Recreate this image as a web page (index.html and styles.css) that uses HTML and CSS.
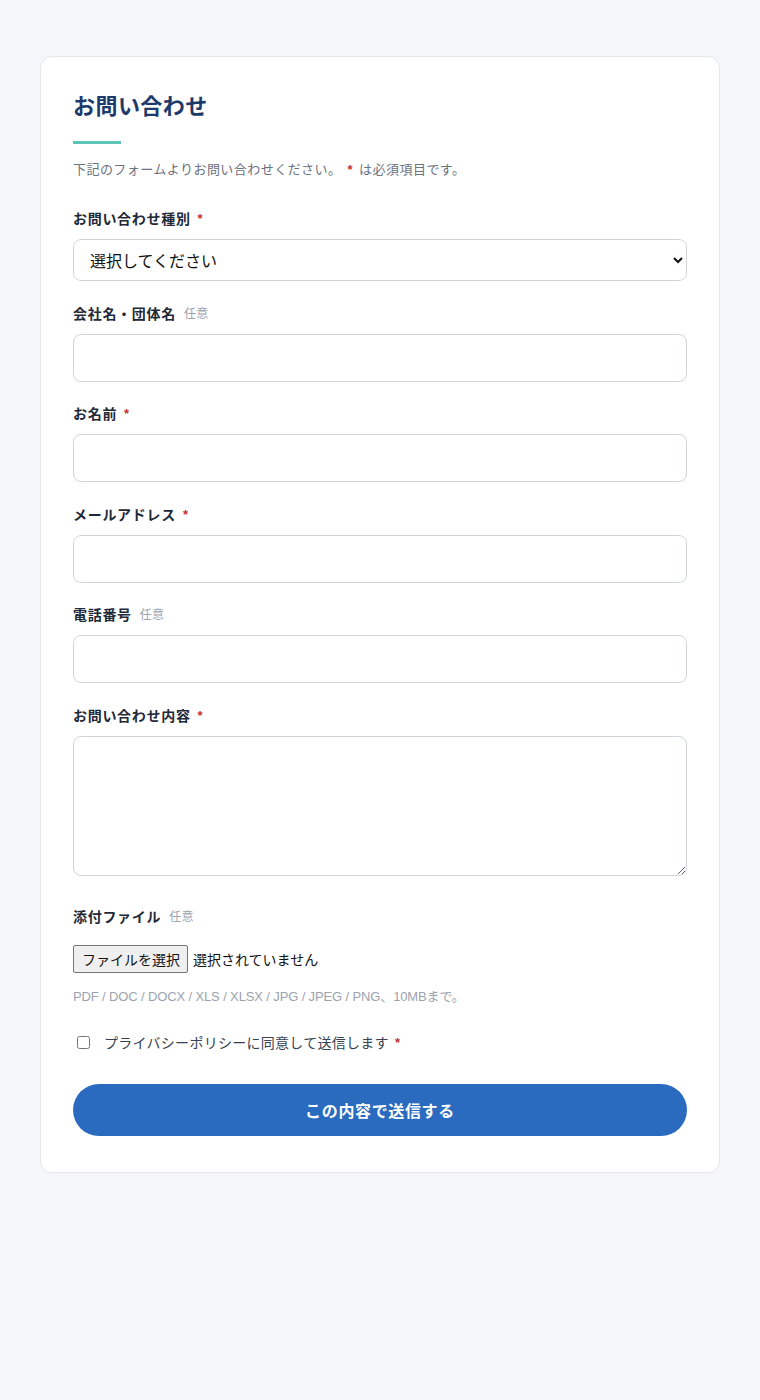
FILE: index.html
```html
<!DOCTYPE html>
<html lang="ja">
<head>
<meta charset="utf-8">
<title>お問い合わせ</title>
<link rel="stylesheet" href="styles.css">
</head>
<body>
<main class="card">
  <h1 class="title">お問い合わせ</h1>
  <div class="title-bar"></div>
  <p class="lead">下記のフォームよりお問い合わせください。 <span class="req">*</span> は必須項目です。</p>
  <form class="form">
    <div class="field">
      <label class="label" for="kind">お問い合わせ種別<span class="req">*</span></label>
      <select class="select" id="kind">
        <option>選択してください</option>
      </select>
    </div>
    <div class="field">
      <label class="label" for="company">会社名・団体名<span class="opt">任意</span></label>
      <input class="input" id="company" type="text">
    </div>
    <div class="field">
      <label class="label" for="name">お名前<span class="req">*</span></label>
      <input class="input" id="name" type="text">
    </div>
    <div class="field">
      <label class="label" for="email">メールアドレス<span class="req">*</span></label>
      <input class="input" id="email" type="email">
    </div>
    <div class="field">
      <label class="label" for="tel">電話番号<span class="opt">任意</span></label>
      <input class="input" id="tel" type="tel">
    </div>
    <div class="field field-textarea">
      <label class="label" for="body">お問い合わせ内容<span class="req">*</span></label>
      <textarea class="textarea" id="body"></textarea>
    </div>
    <div class="field field-file">
      <span class="label">添付ファイル<span class="opt">任意</span></span>
      <label class="file-row">
        <input class="file-input" type="file">
        <span class="file-btn">ファイルを選択</span>
        <span class="file-name">選択されていません</span>
      </label>
      <p class="hint">PDF / DOC / DOCX / XLS / XLSX / JPG / JPEG / PNG、10MBまで。</p>
    </div>
    <label class="agree"><input type="checkbox" class="check"><span>プライバシーポリシーに同意して送信します</span><span class="req">*</span></label>
    <button type="button" class="submit">この内容で送信する</button>
  </form>
</main>
</body>
</html>
```

FILE: styles.css
```css
html, body {
  margin: 0;
  padding: 0;
}
body {
  background: #f4f6fa;
  font-family: "Liberation Sans", "Noto Sans CJK JP", sans-serif;
  color: #1f2937;
  padding: 56px 40px 0;
}
.card {
  background: #fff;
  border: 1px solid #e5e7eb;
  border-radius: 12px;
  padding: 34px 32px 36px;
  box-sizing: border-box;
  width: 680px;
}
.title {
  margin: 0;
  font-size: 22px;
  line-height: 32px;
  font-weight: 700;
  letter-spacing: 0.02em;
  color: #1e3a6b;
}
.title-bar {
  width: 48px;
  height: 3px;
  background: #5ec4b6;
  margin-top: 18px;
}
.lead {
  margin: 16px 0 0;
  font-size: 13px;
  line-height: 20px;
  letter-spacing: 0.035em;
  color: #6b7280;
}
.lead .req {
  margin: 0 2px;
}
.form {
  display: flex;
  flex-direction: column;
  margin-top: 29px;
}
.field {
  display: flex;
  flex-direction: column;
  margin-bottom: 22.5px;
}
.label {
  height: 20px;
  font-size: 14px;
  line-height: 20px;
  font-weight: 700;
  letter-spacing: 0.05em;
  color: #1f2937;
  margin-bottom: 10px;
  display: flex;
  align-items: center;
}
.req {
  color: #c53030;
  font-weight: 700;
  margin-left: 7px;
  font-size: 13px;
}
.opt {
  color: #9ca3af;
  font-weight: 400;
  font-size: 12px;
  letter-spacing: 0.02em;
  margin-left: 8px;
}
.select {
  height: 42px;
  border: 1px solid #d1d5db;
  border-radius: 8px;
  background: #fff;
  font-size: 16px;
  padding: 0 12px;
  color: #111;
  font-family: "Noto Sans CJK JP", sans-serif;
}
.input {
  height: 48px;
  border: 1px solid #d1d5db;
  border-radius: 8px;
  background: #fff;
  box-sizing: border-box;
  padding: 0 14px;
  font-size: 16px;
}
.textarea {
  height: 140px;
  border: 1px solid #d1d5db;
  border-radius: 8px;
  box-sizing: border-box;
  padding: 12px 14px;
  font-size: 16px;
  resize: vertical;
  display: block;
}
.field-textarea {
  margin-bottom: 31px;
}
.field-file {
  margin-bottom: 27px;
}
.field-file .label {
  margin-bottom: 18px;
}
.file-row {
  display: flex;
  align-items: center;
  gap: 5px;
  height: 28px;
  font-family: "Noto Sans CJK JP", sans-serif;
  font-size: 14px;
  color: #111;
}
.file-input {
  display: none;
}
.file-btn {
  box-sizing: border-box;
  height: 28px;
  display: flex;
  align-items: center;
  padding: 0 7px 0 8px;
  background: #efefef;
  border: 1px solid #767676;
  border-radius: 2px;
  line-height: 20px;
}
.hint {
  height: 18px;
  margin: 15px 0 0;
  font-size: 13px;
  line-height: 18px;
  letter-spacing: -0.01em;
  color: #9ca3af;
}
.agree {
  height: 20px;
  display: flex;
  align-items: center;
  font-size: 14px;
  line-height: 20px;
  letter-spacing: 0.02em;
  color: #374151;
  padding-left: 4px;
}
.check {
  margin: 0 14px 0 0;
  width: 13px;
  height: 13px;
}
.agree .req {
  margin-left: 6px;
}
.submit {
  margin-top: 31px;
  height: 52px;
  border: none;
  border-radius: 26px;
  background: #2a6bbf;
  color: #fff;
  font-size: 16px;
  font-weight: 700;
  letter-spacing: 0.04em;
  font-family: "Noto Sans CJK JP", sans-serif;
}
```
